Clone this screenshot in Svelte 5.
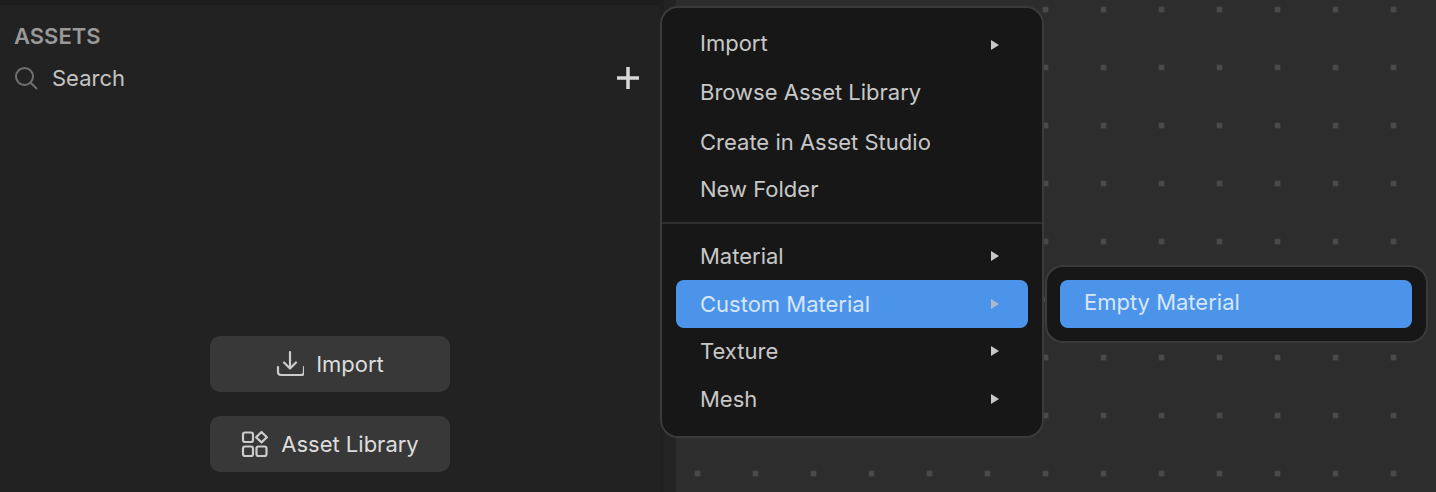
<script lang="ts">
  // row heights differ a little in the original menu
  const groups = [
    [
      { label: "Import", sub: true, h: 48 },
      { label: "Browse Asset Library", sub: false, h: 50 },
      { label: "Create in Asset Studio", sub: false, h: 50 },
      { label: "New Folder", sub: false, h: 44 },
    ],
    [
      { label: "Material", sub: true, h: 48 },
      { label: "Custom Material", sub: true, active: true, h: 48 },
      { label: "Texture", sub: true, h: 46 },
      { label: "Mesh", sub: true, h: 50 },
    ],
  ];
</script>

<div class="app">
  <aside class="assets">
    <h2 class="assets__title">ASSETS</h2>
    <div class="assets__search">
      <svg width="24" height="24" viewBox="0 0 24 24" fill="none" stroke="#707070" stroke-width="2">
        <circle cx="10.5" cy="10.5" r="8.5" />
        <path d="M16.5 16.5l6.5 6.5" />
      </svg>
      <span class="assets__search-label">Search</span>
      <svg class="assets__add" width="24" height="24" viewBox="0 0 24 24" fill="none" stroke="#d8d8d8" stroke-width="3.5">
        <path d="M12 1v22M1 12h22" />
      </svg>
    </div>
    <div class="assets__actions">
      <button class="action">
        <svg width="28" height="28" viewBox="0 0 28 28" fill="none" stroke="#ccc" stroke-width="2.2" stroke-linecap="round" stroke-linejoin="round">
          <path d="M14 2v16M8 12.5l6 6 6-6M2 17v5a3 3 0 0 0 3 3h20a3 3 0 0 0 3-3v-5" />
        </svg>
        Import
      </button>
      <button class="action">
        <svg class="action__library" width="28" height="28" viewBox="0 0 28 28" fill="none" stroke="#ccc" stroke-width="2.2" stroke-linejoin="round">
          <rect x="2" y="2.5" width="10" height="9.5" rx="2" />
          <rect x="2" y="16.5" width="10" height="9.5" rx="2" />
          <rect x="15.5" y="16.5" width="10" height="9.5" rx="2" />
          <path d="M20.5 2l5.4 5.2-5.4 5.2-5.4-5.2z" />
        </svg>
        Asset Library
      </button>
    </div>
  </aside>

  <main class="canvas">
    <div class="menus">
      <div class="menu">
        {#each groups as group, i}
          {#if i > 0}<div class="menu__sep"></div>{/if}
          {#each group as item}
            <div class="menu__item" class:menu__item--active={item.active} style="height: {item.h}px">
              <span>{item.label}</span>
              {#if item.sub}<i class="menu__arrow"></i>{/if}
            </div>
          {/each}
        {/each}
      </div>
      <div class="menu menu--sub">
        <div class="menu__item menu__item--active menu__item--lifted"><span>Empty Material</span></div>
      </div>
    </div>
  </main>
</div>

<style>
  :global(body) {
    margin: 0;
    background: #222;
  }

  .app {
    display: flex;
    width: 1436px;
    height: 492px;
    overflow: hidden;
    font-family: Inter, "Liberation Sans", sans-serif;
    color: #ccc;
    background: #242424;
  }

  .assets {
    width: 664px;
    flex: none;
    background: #222;
    border-top: 5px solid #1d1d1d;
    border-right: 4px solid #1f1f1f;
    display: flex;
    flex-direction: column;
    padding: 19px 20px 20px 14px;
    box-sizing: border-box;
  }

  .assets__title {
    margin: 0;
    font-size: 22px;
    line-height: 24px;
    font-weight: 600;
    color: #999;
  }

  .assets__search {
    display: flex;
    align-items: center;
    gap: 14px;
    margin-top: 17px;
    font-size: 22px;
    color: #c4c4c4;
  }

  .assets__search-label {
    flex: 1;
  }

  .assets__actions {
    display: flex;
    flex-direction: column;
    align-items: center;
    gap: 24px;
    margin-top: auto;
    padding-left: 6px;
  }

  .action {
    display: flex;
    align-items: center;
    justify-content: center;
    gap: 12px;
    width: 240px;
    height: 56px;
    border: 0;
    border-radius: 10px;
    background: #383838;
    color: #ddd;
    font: inherit;
    font-size: 22px;
  }

  .action__library {
    margin-right: 0;
  }

  .canvas {
    flex: 1;
    margin-left: 12px;
    background-color: #2d2d2d;
    background-image: url("data:image/svg+xml,%3Csvg xmlns='http://www.w3.org/2000/svg' width='58' height='58'%3E%3Crect x='26' y='26' width='7' height='7' rx='1.5' fill='%23363636'/%3E%3Crect x='27' y='27' width='5' height='5' rx='1' fill='%234a4a4a'/%3E%3C/svg%3E");
    background-size: 58px 58px;
    background-position: -8px -20px;
    position: relative;
  }

  .menus {
    position: absolute;
    left: -16px;
    top: 6px;
    display: flex;
    align-items: flex-start;
  }

  .menu {
    width: 384px;
    box-sizing: border-box;
    padding: 11px 14px 12px;
    background: #171717;
    border: 2px solid #3b3b3b;
    border-radius: 18px;
  }

  .menu--sub {
    width: 383px;
    margin-top: 259px;
    margin-left: 1px;
    padding: 13px 14px 13px 13px;
  }

  .menu__item {
    display: flex;
    align-items: center;
    justify-content: space-between;
    height: 48px;
    padding: 0 29px 0 24px;
    border-radius: 8px;
    font-size: 22px;
    color: #c8c8c8;
  }

  .menu__item--active {
    background: #4c94ea;
    color: #d6e6fa;
  }

  .menu__item--lifted {
    padding-bottom: 4px;
    box-sizing: border-box;
  }

  .menu__sep {
    height: 2px;
    margin: 11px -14px 8px;
    background: #2e2e2e;
  }

  .menu__arrow {
    width: 0;
    height: 0;
    border-left: 8px solid #c8c8c8;
    border-top: 5px solid transparent;
    border-bottom: 5px solid transparent;
  }

  .menu__item:first-child .menu__arrow {
    margin-top: 4px;
  }

  .menu__item--active .menu__arrow {
    border-left-color: #adb9c7;
    margin-top: 0;
  }
</style>
